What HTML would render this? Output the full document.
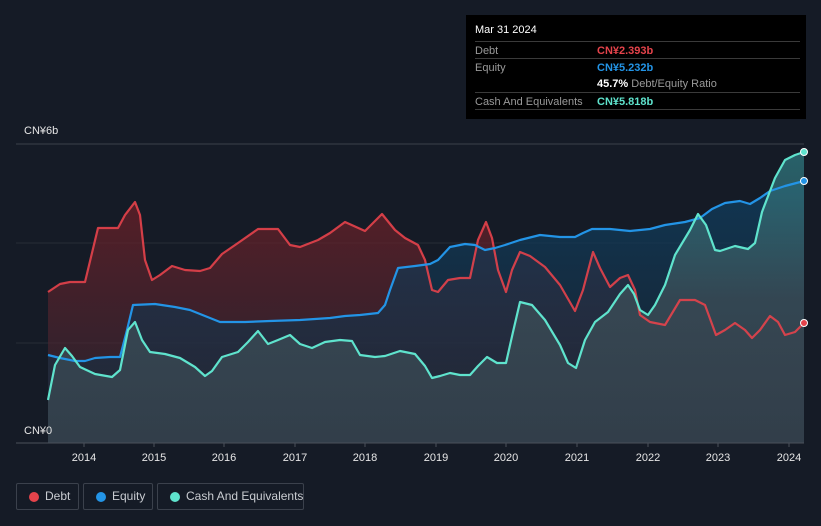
<!DOCTYPE html>
<html><head><style>
html,body{margin:0;background:#151b26;width:821px;height:526px;overflow:hidden;font-family:"Liberation Sans",sans-serif;position:relative}
.tt{position:absolute;left:466px;top:15px;width:340px;height:104px;background:#000;color:#fff;font-size:11px}
.tt .r{position:absolute;left:9px;right:6px;border-top:1px solid #3a3a3a;height:17px}
.tt span{position:absolute;top:3px;white-space:nowrap}
.lg{position:absolute;top:483px;height:27px;border:1px solid #3b414c;border-radius:2px;color:#c9ccd1;font-size:12px;line-height:25px;box-sizing:border-box;white-space:nowrap}
.lg i{position:absolute;left:12px;top:8px;width:10px;height:10px;border-radius:50%}
.lg b{font-weight:normal;position:absolute;left:28px;white-space:nowrap}
.lab{position:absolute;color:#e6e6e6;font-size:11px}
</style></head><body>
<svg width="821" height="526" style="position:absolute;left:0;top:0" stroke-linejoin="round">
<defs>
<linearGradient id="gd" x1="0" y1="0" x2="0" y2="1"><stop offset="0" stop-color="#6b1f27" stop-opacity=".75"/><stop offset="1" stop-color="#3a2a36" stop-opacity=".5"/></linearGradient>
<linearGradient id="ge" x1="0" y1="0" x2="0" y2="1"><stop offset="0" stop-color="#0f3d5e" stop-opacity=".8"/><stop offset="1" stop-color="#1a2a3a" stop-opacity=".5"/></linearGradient>
<linearGradient id="gc" x1="0" y1="0" x2="0" y2="1"><stop offset="0" stop-color="#2f7f86" stop-opacity=".7"/><stop offset=".5" stop-color="#3b4d57" stop-opacity=".8"/><stop offset="1" stop-color="#36444f" stop-opacity=".8"/></linearGradient>
</defs>
<line x1="16" y1="144" x2="804" y2="144" stroke="#3a404b"/>
<line x1="16" y1="243" x2="804" y2="243" stroke="#262c37"/>
<line x1="16" y1="343" x2="804" y2="343" stroke="#262c37"/>
<polygon fill="url(#gd)" points="48,443 48,292 60,284 70,282 85,282 98,228 118,228 125,215 135,202 140,215 145,260 152,280 160,275 172,266 185,270 200,271 210,268 222,254 238,243 258,229 278,229 290,245 300,247 318,240 330,233 345,222 365,231 382,214 395,230 405,238 418,245 425,260 432,290 438,292 448,280 460,278 470,278 478,240 486,222 492,238 498,270 506,292 512,270 520,252 530,256 545,267 560,285 575,311 583,290 593,252 600,268 610,287 620,278 628,275 635,290 640,315 650,322 665,325 680,300 695,300 705,305 716,335 725,330 735,323 745,330 752,338 760,330 770,316 778,322 785,335 795,332 804,323 804,443"/>
<polygon fill="url(#ge)" points="48,443 48,355 60,358 75,361 85,361 95,358 110,357 120,357 127,330 133,305 155,304 175,307 190,310 205,316 220,322 245,322 270,321 300,320 330,318 345,316 360,315 378,313 385,305 390,290 398,268 415,266 430,264 438,260 450,247 465,244 475,245 485,250 495,248 505,245 520,240 540,235 560,237 575,237 583,233 592,229 610,229 630,231 650,229 665,225 685,222 700,218 712,209 725,203 740,201 750,204 760,198 770,191 785,186 804,181 804,443"/>
<polygon fill="url(#gc)" points="48,443 48,400 55,365 65,348 72,356 80,367 95,374 112,377 120,370 128,330 135,322 142,340 150,352 165,354 180,358 195,367 205,376 212,371 222,357 238,352 248,342 258,331 268,344 278,340 290,335 300,344 312,348 325,342 340,340 352,341 360,355 375,357 385,356 400,351 415,354 425,366 432,378 440,376 450,373 460,375 470,375 478,366 487,357 497,363 506,363 513,332 520,302 532,305 545,320 560,345 568,363 576,368 585,340 595,322 608,312 620,294 628,285 634,294 640,310 648,315 655,305 665,285 675,255 690,230 698,214 706,225 715,250 720,251 735,246 748,249 755,243 762,212 775,178 785,160 795,155 804,152 804,443"/>
<polyline fill="none" stroke="#e5434b" stroke-width="2.2" points="48,292 60,284 70,282 85,282 98,228 118,228 125,215 135,202 140,215 145,260 152,280 160,275 172,266 185,270 200,271 210,268 222,254 238,243 258,229 278,229 290,245 300,247 318,240 330,233 345,222 365,231 382,214 395,230 405,238 418,245 425,260 432,290 438,292 448,280 460,278 470,278 478,240 486,222 492,238 498,270 506,292 512,270 520,252 530,256 545,267 560,285 575,311 583,290 593,252 600,268 610,287 620,278 628,275 635,290 640,315 650,322 665,325 680,300 695,300 705,305 716,335 725,330 735,323 745,330 752,338 760,330 770,316 778,322 785,335 795,332 804,323" opacity=".9"/>
<polyline fill="none" stroke="#2394e6" stroke-width="2.2" points="48,355 60,358 75,361 85,361 95,358 110,357 120,357 127,330 133,305 155,304 175,307 190,310 205,316 220,322 245,322 270,321 300,320 330,318 345,316 360,315 378,313 385,305 390,290 398,268 415,266 430,264 438,260 450,247 465,244 475,245 485,250 495,248 505,245 520,240 540,235 560,237 575,237 583,233 592,229 610,229 630,231 650,229 665,225 685,222 700,218 712,209 725,203 740,201 750,204 760,198 770,191 785,186 804,181"/>
<polyline fill="none" stroke="#5fe3cd" stroke-width="2.2" points="48,400 55,365 65,348 72,356 80,367 95,374 112,377 120,370 128,330 135,322 142,340 150,352 165,354 180,358 195,367 205,376 212,371 222,357 238,352 248,342 258,331 268,344 278,340 290,335 300,344 312,348 325,342 340,340 352,341 360,355 375,357 385,356 400,351 415,354 425,366 432,378 440,376 450,373 460,375 470,375 478,366 487,357 497,363 506,363 513,332 520,302 532,305 545,320 560,345 568,363 576,368 585,340 595,322 608,312 620,294 628,285 634,294 640,310 648,315 655,305 665,285 675,255 690,230 698,214 706,225 715,250 720,251 735,246 748,249 755,243 762,212 775,178 785,160 795,155 804,152"/>
<circle cx="804" cy="323" r="3.5" fill="#e5434b" stroke="#fff" stroke-width="1"/>
<circle cx="804" cy="181" r="3.5" fill="#2394e6" stroke="#fff" stroke-width="1"/>
<circle cx="804" cy="152" r="3.5" fill="#5fe3cd" stroke="#fff" stroke-width="1"/>
<line x1="16" y1="443" x2="804" y2="443" stroke="#4a505b"/>
<g stroke="#4a505b"><line x1="84" y1="443" x2="84" y2="447"/><line x1="154" y1="443" x2="154" y2="447"/><line x1="224" y1="443" x2="224" y2="447"/><line x1="295" y1="443" x2="295" y2="447"/><line x1="365" y1="443" x2="365" y2="447"/><line x1="436" y1="443" x2="436" y2="447"/><line x1="506" y1="443" x2="506" y2="447"/><line x1="577" y1="443" x2="577" y2="447"/><line x1="648" y1="443" x2="648" y2="447"/><line x1="718" y1="443" x2="718" y2="447"/><line x1="789" y1="443" x2="789" y2="447"/></g>
<g fill="#e6e6e6" font-size="11" text-anchor="middle" font-family="Liberation Sans,sans-serif"><text x="84" y="461">2014</text><text x="154" y="461">2015</text><text x="224" y="461">2016</text><text x="295" y="461">2017</text><text x="365" y="461">2018</text><text x="436" y="461">2019</text><text x="506" y="461">2020</text><text x="577" y="461">2021</text><text x="648" y="461">2022</text><text x="718" y="461">2023</text><text x="789" y="461">2024</text></g>
</svg>
<div class="lab" style="left:24px;top:125px">CN¥6b</div>
<div class="lab" style="left:24px;top:425px">CN¥0</div>
<div class="tt">
<span style="left:9px;top:9px;position:absolute">Mar 31 2024</span>
<div class="r" style="top:26px"><span style="left:0;color:#9a9a9a">Debt</span><span style="left:122px;color:#e5434b;font-weight:bold">CN¥2.393b</span></div>
<div class="r" style="top:43px"><span style="left:0;color:#9a9a9a">Equity</span><span style="left:122px;color:#2394e6;font-weight:bold">CN¥5.232b</span></div>
<div class="r" style="top:60px;border:none"><span style="left:122px"><b>45.7%</b> <span style="position:static;color:#9a9a9a">Debt/Equity Ratio</span></span></div>
<div class="r" style="top:77px"><span style="left:0;color:#9a9a9a">Cash And Equivalents</span><span style="left:122px;color:#5fe3cd;font-weight:bold">CN¥5.818b</span></div>
<div class="r" style="top:94px;height:0"></div>
</div>
<div class="lg" style="left:16px;width:63px"><i style="background:#e5434b"></i><b>Debt</b></div>
<div class="lg" style="left:83px;width:70px"><i style="background:#2394e6"></i><b>Equity</b></div>
<div class="lg" style="left:157px;width:147px"><i style="background:#5fe3cd"></i><b>Cash And Equivalents</b></div>
</body></html>
